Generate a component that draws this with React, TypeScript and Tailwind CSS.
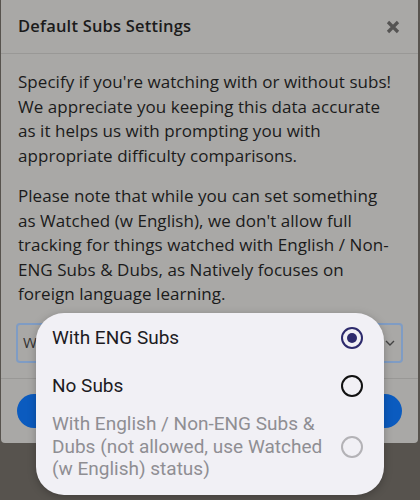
import React from "react";

export default function App() {
  const body = "font-['Open_Sans',sans-serif]";
  const roboto = "font-['Roboto',sans-serif]";
  return (
    <div className="relative w-[420px] h-[500px] overflow-hidden bg-[#57534e]">
      <div className={`ml-[1px] w-[417px] bg-[#a9a8a6] rounded-b-[4px] ${body} text-[#1b1b1b]`}>
        <div className="h-[54px] flex items-center justify-between pl-[17px] pr-[18px] border-b border-[#999896]">
          <div className="text-[16.5px] font-semibold tracking-[0.2px]">Default Subs Settings</div>
          <svg width="14" height="14" viewBox="0 0 14 14" className="mt-[1px]">
            <path d="M2 2 L12 12 M12 2 L2 12" stroke="#555453" strokeWidth="3.2" strokeLinecap="butt" />
          </svg>
        </div>
        <div className="px-[17px] pt-[16px] pb-[15px] text-[17px] leading-[24.5px] tracking-[0.05px]">
          <p className="whitespace-nowrap">
            Specify if you're watching with or without subs!<br />
            We appreciate you keeping this data accurate<br />
            as it helps us with prompting you with<br />
            appropriate difficulty comparisons.
          </p>
          <p className="mt-[16px] whitespace-nowrap">
            Please note that while you can set something<br />
            as Watched (w English), we don't allow full<br />
            tracking for things watched with English / Non-<br />
            ENG Subs &amp; Dubs, as Natively focuses on<br />
            foreign language learning.
          </p>
          <div className="mt-[16px] -mx-[2px] h-[40px] rounded-[4px] border-2 border-[#7f9cc4] flex items-center justify-between pl-[5px] pr-[6px]">
            <span className="text-[15px] text-[#333]">W</span>
            <svg width="10" height="6" viewBox="0 0 10 6">
              <path d="M1 1 L5 5 L9 1" stroke="#444" strokeWidth="1.4" fill="none" />
            </svg>
          </div>
        </div>
        <div className="border-t border-[#999896] px-[16px] pt-[15px] pb-[15px] flex gap-[8px]">
          <div className="flex-1 h-[34px] rounded-full bg-[#0b5bbf]" />
          <div className="flex-1 h-[34px] rounded-full bg-[#0b5bbf]" />
        </div>
      </div>

      <div className={`absolute left-[36px] top-[313px] w-[348px] h-[182px] rounded-[28px] bg-[#f1f0f5] shadow-[0_2px_8px_rgba(0,0,0,0.25)] ${roboto}`}>
        <div className="pl-[16px] pr-[21px] pt-[12px]">
          <div className="h-[26px] flex items-center justify-between text-[19px] text-[#1c1b1f]">
            <span>With ENG Subs</span>
            <span className="w-[22px] h-[22px] rounded-full border-[2px] border-[#2d2a6c] flex items-center justify-center">
              <span className="w-[10px] h-[10px] rounded-full bg-[#2d2a6c]" />
            </span>
          </div>
          <div className="mt-[22px] h-[26px] flex items-center justify-between text-[19px] text-[#1c1b1f]">
            <span>No Subs</span>
            <span className="w-[22px] h-[22px] rounded-full border-[2px] border-[#111]" />
          </div>
          <div className="mt-[14px] flex items-center justify-between text-[19px] leading-[22.5px] text-[#8f8e93]">
            <span className="whitespace-nowrap">
              With English / Non-ENG Subs &amp;<br />
              Dubs (not allowed, use Watched<br />
              (w English) status)
            </span>
            <span className="w-[22px] h-[22px] rounded-full border-[2px] border-[#b3b2b6]" />
          </div>
        </div>
      </div>
    </div>
  );
}
